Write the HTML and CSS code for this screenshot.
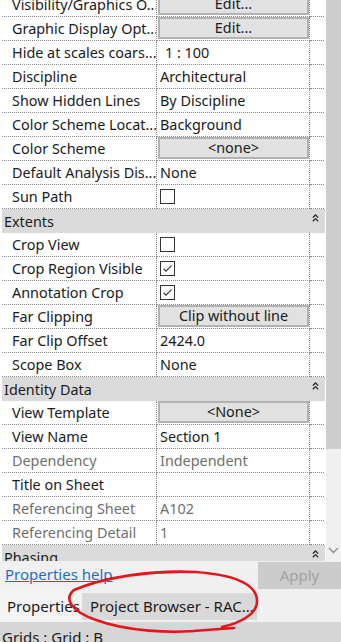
FILE: index.html
```html
<!DOCTYPE html>
<html>
<head>
<meta charset="utf-8">
<link rel="stylesheet" href="styles.css">
</head>
<body>
<div class="panel">
  <div class="main">
    <div class="viewport">
      <div class="table">
        <div class="row"><div class="cell label">Visibility/Graphics O...</div><div class="cell value"><div class="btn">Edit...</div></div><div class="cell extra"></div></div>
        <div class="row"><div class="cell label">Graphic Display Opt...</div><div class="cell value"><div class="btn">Edit...</div></div><div class="cell extra"></div></div>
        <div class="row"><div class="cell label">Hide at scales coars...</div><div class="cell value indent">1 : 100</div><div class="cell extra"></div></div>
        <div class="row"><div class="cell label">Discipline</div><div class="cell value">Architectural</div><div class="cell extra"></div></div>
        <div class="row"><div class="cell label">Show Hidden Lines</div><div class="cell value">By Discipline</div><div class="cell extra"></div></div>
        <div class="row"><div class="cell label">Color Scheme Locat...</div><div class="cell value">Background</div><div class="cell extra"></div></div>
        <div class="row"><div class="cell label">Color Scheme</div><div class="cell value"><div class="btn">&lt;none&gt;</div></div><div class="cell extra"></div></div>
        <div class="row"><div class="cell label">Default Analysis Dis...</div><div class="cell value">None</div><div class="cell extra"></div></div>
        <div class="row"><div class="cell label">Sun Path</div><div class="cell value"><div class="chk"></div></div><div class="cell extra"></div></div>
        <div class="group"><span>Extents</span><svg class="collapse" width="7" height="8" viewBox="0 0 7 8"><path d="M0.8 3.6 L3.5 1 L6.2 3.6 M0.8 7.2 L3.5 4.6 L6.2 7.2" fill="none" stroke="#2b2b2b" stroke-width="1.3"/></svg></div>
        <div class="row"><div class="cell label">Crop View</div><div class="cell value"><div class="chk"></div></div><div class="cell extra"></div></div>
        <div class="row"><div class="cell label">Crop Region Visible</div><div class="cell value"><div class="chk"><svg width="13" height="13" viewBox="0 0 13 13"><path d="M2.5 6.8 L5 9.2 L10.5 3.6" fill="none" stroke="#3a3a3a" stroke-width="1.2"/></svg></div></div><div class="cell extra"></div></div>
        <div class="row"><div class="cell label">Annotation Crop</div><div class="cell value"><div class="chk"><svg width="13" height="13" viewBox="0 0 13 13"><path d="M2.5 6.8 L5 9.2 L10.5 3.6" fill="none" stroke="#3a3a3a" stroke-width="1.2"/></svg></div></div><div class="cell extra"></div></div>
        <div class="row"><div class="cell label">Far Clipping</div><div class="cell value"><div class="btn">Clip without line</div></div><div class="cell extra"></div></div>
        <div class="row"><div class="cell label">Far Clip Offset</div><div class="cell value">2424.0</div><div class="cell extra"></div></div>
        <div class="row"><div class="cell label">Scope Box</div><div class="cell value">None</div><div class="cell extra"></div></div>
        <div class="group"><span>Identity Data</span><svg class="collapse" width="7" height="8" viewBox="0 0 7 8"><path d="M0.8 3.6 L3.5 1 L6.2 3.6 M0.8 7.2 L3.5 4.6 L6.2 7.2" fill="none" stroke="#2b2b2b" stroke-width="1.3"/></svg></div>
        <div class="row"><div class="cell label">View Template</div><div class="cell value"><div class="btn">&lt;None&gt;</div></div><div class="cell extra"></div></div>
        <div class="row"><div class="cell label">View Name</div><div class="cell value">Section 1</div><div class="cell extra"></div></div>
        <div class="row dim"><div class="cell label">Dependency</div><div class="cell value">Independent</div><div class="cell extra"></div></div>
        <div class="row"><div class="cell label">Title on Sheet</div><div class="cell value"></div><div class="cell extra"></div></div>
        <div class="row dim"><div class="cell label">Referencing Sheet</div><div class="cell value">A102</div><div class="cell extra"></div></div>
        <div class="row dim"><div class="cell label">Referencing Detail</div><div class="cell value">1</div><div class="cell extra"></div></div>
        <div class="group"><span>Phasing</span><svg class="collapse" width="7" height="8" viewBox="0 0 7 8"><path d="M0.8 3.6 L3.5 1 L6.2 3.6 M0.8 7.2 L3.5 4.6 L6.2 7.2" fill="none" stroke="#2b2b2b" stroke-width="1.3"/></svg></div>
      </div>
    </div>
    <div class="scrollbar">
      <div class="thumb"></div>
      <div class="track">
        <svg class="down" width="11" height="7" viewBox="0 0 11 7"><path d="M1 1 L5.5 5.5 L10 1" fill="none" stroke="#8a8a8a" stroke-width="1.4"/></svg>
      </div>
    </div>
  </div>
  <div class="help-row">
    <a class="help" href="#">Properties help</a>
    <div class="apply">Apply</div>
  </div>
  <div class="tabs">
    <div class="tab active">Properties</div>
    <div class="tab">Project Browser - RAC...</div>
  </div>
  <div class="status">Grids : Grid : B</div>
  <svg class="annotation" width="341" height="642" viewBox="0 0 341 642">
    <path d="M222 627 C240 623 258 614 257 600 C256 585 236 575 196 572 C152 570 104 577 74 590 C64 598 70 611 96 620 C126 631 170 634 206 630 L234 628" fill="none" stroke="#e2161b" stroke-width="2.6" stroke-linecap="round" stroke-linejoin="round"/>
  </svg>
</div>
</body>
</html>
```
FILE: styles.css
```css
html, body {
  margin: 0;
  padding: 0;
}
body {
  width: 341px;
  height: 642px;
  overflow: hidden;
  font-family: "Noto Sans", "Open Sans", sans-serif;
  font-size: 14.4px;
  color: #1b1b1b;
  background: #f0f0f0;
}
.panel {
  position: relative;
  display: flex;
  flex-direction: column;
  height: 642px;
}
.main {
  display: flex;
  height: 561px;
  flex: none;
}
.viewport {
  width: 324px;
  padding-left: 2px;
  overflow: hidden;
  background: #ffffff;
}
.table {
  margin-top: -7px;
  width: 324px;
}
.row {
  display: grid;
  grid-template-columns: 155px 153px 16px;
  height: 24px;
}
.cell {
  box-sizing: border-box;
  height: 24px;
  border-right: 1px dotted #8a8a8a;
  border-bottom: 1px dotted #8a8a8a;
  line-height: 23px;
  white-space: nowrap;
  overflow: hidden;
}
.label {
  padding-left: 10px;
}
.value {
  padding-left: 3px;
}
.value.indent {
  padding-left: 8px;
}
.dim .cell {
  color: #6f6f6f;
}
.btn {
  box-sizing: border-box;
  width: 151px;
  height: 22px;
  margin: 0 0 0 -2px;
  border: 2px solid #b2b2b2;
  background: #e1e1e1;
  text-align: center;
  line-height: 18px;
}
.chk {
  box-sizing: border-box;
  width: 15px;
  height: 15px;
  margin-top: 4px;
  border: 1px solid #333333;
  background: #ffffff;
}
.chk svg {
  display: block;
}
.group {
  box-sizing: border-box;
  width: 323px;
  height: 24px;
  padding: 0 6px 0 2px;
  background: #dadada;
  display: flex;
  justify-content: space-between;
  align-items: center;
  line-height: 23px;
}
.collapse {
  margin-top: -6px;
}
.scrollbar {
  width: 15px;
  display: flex;
  flex-direction: column;
  border-left: 1px solid #ffffff;
  background: #f0f0f0;
}
.thumb {
  height: 449px;
  background: #cdcdcd;
  flex: none;
}
.track {
  flex: 1;
  display: flex;
  align-items: flex-end;
  justify-content: center;
  padding-bottom: 7px;
}
.down {
  display: block;
}
.help-row {
  height: 29px;
  display: flex;
  justify-content: space-between;
  align-items: flex-start;
  flex: none;
  background: #f0f0f0;
}
.help {
  padding-left: 5px;
  font-size: 15px;
  line-height: 27px;
  color: #1f6fc1;
  text-decoration: underline;
}
.apply {
  width: 83px;
  height: 27px;
  margin-top: 1px;
  background: #cccccc;
  color: #a2a2a2;
  font-size: 15px;
  line-height: 27px;
  text-align: center;
}
.tabs {
  height: 32px;
  display: flex;
  flex: none;
  background: #f0f0f0;
}
.tab {
  box-sizing: border-box;
  width: 175px;
  margin: 3px 0 2px;
  padding-left: 8px;
  background: #d9d9d9;
  font-size: 15px;
  line-height: 27px;
  white-space: nowrap;
}
.tab.active {
  width: 82px;
  margin: 0;
  padding-left: 7px;
  background: #f3f3f3;
  line-height: 32px;
}
.status {
  flex: 1;
  padding: 5px 0 0 2px;
  background: #d6d6d6;
  font-size: 15px;
  line-height: 20px;
  white-space: nowrap;
}
.annotation {
  position: absolute;
  left: 0;
  top: 0;
  pointer-events: none;
}
```
